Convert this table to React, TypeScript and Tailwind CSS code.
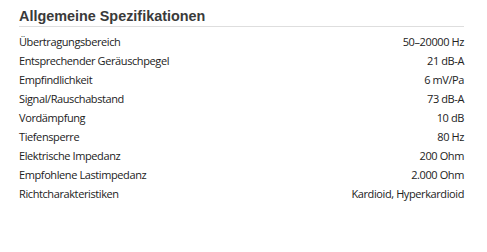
const specs: [string, string][] = [
  ["Übertragungsbereich", "50–20000 Hz"],
  ["Entsprechender Geräuschpegel", "21 dB-A"],
  ["Empfindlichkeit", "6 mV/Pa"],
  ["Signal/Rauschabstand", "73 dB-A"],
  ["Vordämpfung", "10 dB"],
  ["Tiefensperre", "80 Hz"],
  ["Elektrische Impedanz", "200 Ohm"],
  ["Empfohlene Lastimpedanz", "2.000 Ohm"],
  ["Richtcharakteristiken", "Kardioid, Hyperkardioid"],
];

export default function App() {
  return (
    <div className="w-[487px] h-[252px] bg-white pl-[19px] pt-[8px]">
      <div className="w-[445px]">
        <h2
          className="text-[14.4px] font-bold leading-[17px] text-[#3a3a3a] pb-[1px] border-b border-[#dedede]"
          style={{ fontFamily: "Arial, 'Liberation Sans', sans-serif" }}
        >
          Allgemeine Spezifikationen
        </h2>
        <div className="pt-[6px]" style={{ fontFamily: "'Open Sans', sans-serif" }}>
          {specs.map(([label, value]) => (
            <div key={label} className="flex justify-between h-[19px] items-center text-[11px] tracking-[-0.4px] text-[#222]">
              <span>{label}</span>
              <span>{value}</span>
            </div>
          ))}
        </div>
      </div>
    </div>
  );
}
